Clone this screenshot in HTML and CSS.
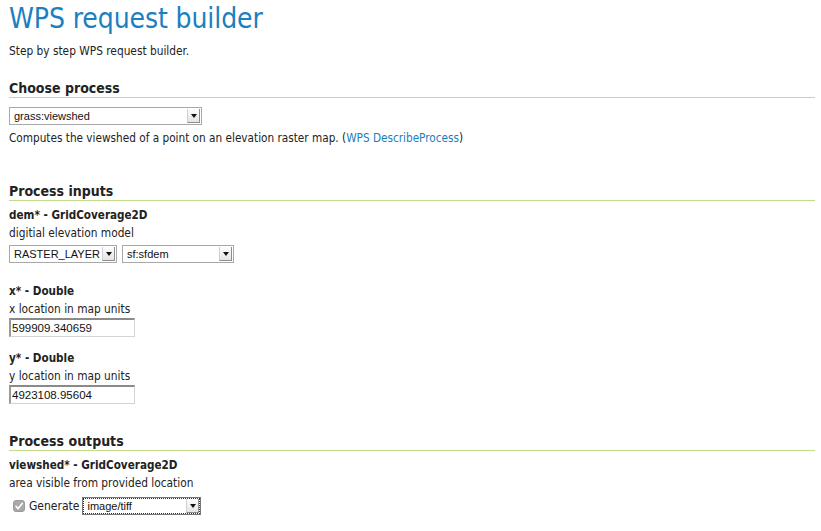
FILE: index.html
```html
<!DOCTYPE html>
<html>
<head>
<meta charset="utf-8">
<link rel="stylesheet" href="styles.css">
</head>
<body>
<h1 class="title">WPS request builder</h1>
<p class="intro">Step by step WPS request builder.</p>

<h2 class="section">Choose process</h2>
<div class="block">
  <span class="sel sel-process"><select><option>grass:viewshed</option></select><span class="arrow"></span></span>
  <p class="desc">Computes the viewshed of a point on an elevation raster map. (<a href="#">WPS DescribeProcess</a>)</p>
</div>

<h2 class="section section-inputs">Process inputs</h2>
<div class="param">
  <div class="pname">dem* - GridCoverage2D</div>
  <div class="pdesc">digitial elevation model</div>
  <div class="row sel-row">
    <span class="sel sel-type"><select><option>RASTER_LAYER</option></select><span class="arrow"></span></span>
    <span class="sel sel-layer"><select><option>sf:sfdem</option></select><span class="arrow"></span></span>
  </div>
</div>
<div class="param">
  <div class="pname">x* - Double</div>
  <div class="pdesc">x location in map units</div>
  <input class="txt" type="text" value="599909.340659">
</div>
<div class="param">
  <div class="pname">y* - Double</div>
  <div class="pdesc">y location in map units</div>
  <input class="txt" type="text" value="4923108.95604">
</div>

<h2 class="section section-outputs">Process outputs</h2>
<div class="param">
  <div class="pname">viewshed* - GridCoverage2D</div>
  <div class="pdesc">area visible from provided location</div>
  <div class="row gen">
    <span class="chk"><svg width="12" height="12" viewBox="0 0 12 12"><rect x="0.5" y="0.5" width="11" height="11" rx="2.5" fill="#a9a9a9" stroke="#9a9a9a"/><path d="M3 6.3 L5.1 8.6 L9.2 3.4" fill="none" stroke="#fff" stroke-width="1.6" stroke-linecap="round" stroke-linejoin="round"/></svg></span>
    <span class="genlabel">Generate</span>
    <span class="sel sel-mime focus"><select><option>image/tiff</option></select><span class="arrow"></span></span>
  </div>
</div>
</body>
</html>
```
FILE: styles.css
```css
html, body {
  margin: 0;
  padding: 0;
  background: #fff;
}
body {
  padding: 0 6px 0 9px;
  font-family: "DejaVu Sans Condensed", "DejaVu Sans", sans-serif;
  font-size: 12px;
  color: #222;
}
.title {
  margin: 0;
  padding-top: 3px;
  font-size: 28px;
  font-weight: normal;
  color: #1a80bf;
  line-height: 32px;
  letter-spacing: -0.1px;
}
.intro {
  margin: 8px 0 0;
  line-height: 16px;
  font-size: 11.8px;
}
.section {
  margin: 21px 0 0;
  font-size: 14px;
  font-weight: bold;
  line-height: 17px;
  padding-bottom: 0;
  border-bottom: 1px solid #c3dc8c;
  color: #222;
}
.section-inputs { margin-top: 37px; }
.section-outputs { margin-top: 29px; }
.block { padding-top: 9px; }
.desc {
  margin: 5px 0 0;
  line-height: 16px;
  font-size: 11.7px;
}
a { color: #1a80bf; text-decoration: none; }
.param { padding-top: 6px; }
.param + .param { padding-top: 13px; }
.pname {
  font-weight: bold;
  font-size: 11.6px;
  line-height: 16px;
}
.pdesc {
  margin-top: 2px;
  line-height: 16px;
  font-size: 11.8px;
}
.row {
  display: flex;
  align-items: center;
  gap: 5px;
  margin-top: 4px;
}
.sel-row { margin-bottom: 7px; }
.sel {
  position: relative;
  display: inline-block;
  height: 18px;
  box-sizing: border-box;
}
.sel select {
  -webkit-appearance: none;
  appearance: none;
  width: 100%;
  height: 18px;
  box-sizing: border-box;
  border: 1px solid #a8a8a8;
  border-radius: 0;
  background: #fff;
  font-family: "Liberation Sans", Arial, sans-serif;
  font-size: 11px;
  color: #111;
  padding: 0 16px 0 4px;
  margin: 0;
  outline: none;
}
.sel .arrow {
  position: absolute;
  right: 2px;
  top: 2px;
  width: 13px;
  height: 14px;
  box-sizing: border-box;
  border-left: 1px solid #d0d0d0;
  border-right: 1px solid #8e8e8e;
  border-bottom: 1px solid #8e8e8e;
  background: linear-gradient(#fdfdfd, #e4e4e4);
  pointer-events: none;
}
.sel .arrow::after {
  content: "";
  position: absolute;
  left: 3px;
  top: 5px;
  border-left: 3px solid transparent;
  border-right: 3px solid transparent;
  border-top: 4px solid #111;
}
.sel-process { width: 193px; }
.sel-type { width: 108px; }
.sel-layer { width: 112px; }
.sel-mime { width: 119px; }
.sel.focus select {
  border: 1px solid #777;
  outline: 1px dotted #333;
  outline-offset: -2px;
}
.txt {
  display: block;
  margin-top: 1px;
  width: 126px;
  height: 19px;
  box-sizing: border-box;
  border: 1px solid #d4d4d4;
  border-top: 2px solid #8a8a8a;
  border-left: 2px solid #9a9a9a;
  padding: 0 1px;
  font-family: "Liberation Sans", Arial, sans-serif;
  font-size: 11.5px;
  color: #111;
  outline: none;
}
.gen {
  margin-top: 6px;
  padding-left: 4px;
  gap: 0;
}
.chk {
  display: inline-flex;
  width: 12px;
  height: 12px;
  margin-right: 4px;
}
.genlabel {
  margin-right: 3px;
}
```
